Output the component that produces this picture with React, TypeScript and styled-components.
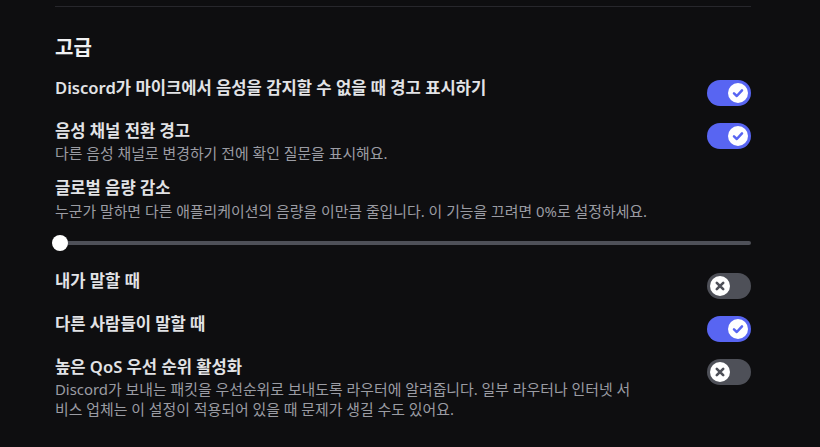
import styled, { createGlobalStyle } from "styled-components";

const GlobalStyle = createGlobalStyle`
  html, body {
    margin: 0;
    padding: 0;
    background: #0e0e10;
  }
  body {
    font-family: "Noto Sans", "Noto Sans CJK KR", sans-serif;
    color: #dfe0e3;
  }
`;

interface ISetting {
  title: string;
  desc?: string;
  checked: boolean;
}

const topSettings: ISetting[] = [
  {
    title: "Discord가 마이크에서 음성을 감지할 수 없을 때 경고 표시하기",
    checked: true,
  },
  {
    title: "음성 채널 전환 경고",
    desc: "다른 음성 채널로 변경하기 전에 확인 질문을 표시해요.",
    checked: true,
  },
];

const bottomSettings: ISetting[] = [
  { title: "내가 말할 때", checked: false },
  { title: "다른 사람들이 말할 때", checked: true },
  {
    title: "높은 QoS 우선 순위 활성화",
    desc: "Discord가 보내는 패킷을 우선순위로 보내도록 라우터에 알려줍니다. 일부 라우터나 인터넷 서비스 업체는 이 설정이 적용되어 있을 때 문제가 생길 수도 있어요.",
    checked: false,
  },
];

function Toggle({ checked }: { checked: boolean }) {
  return (
    <Switch $on={checked}>
      <Knob>
        {checked ? (
          <svg width="14" height="14" viewBox="0 0 14 14">
            <path
              d="M3 7.4 L5.8 10 L11 4.3"
              fill="none"
              stroke="#5865f2"
              strokeWidth="2.5"
              strokeLinecap="round"
              strokeLinejoin="round"
            />
          </svg>
        ) : (
          <svg width="14" height="14" viewBox="0 0 14 14">
            <path
              d="M3.8 3.8 L10.2 10.2 M10.2 3.8 L3.8 10.2"
              fill="none"
              stroke="#4e5058"
              strokeWidth="2.6"
              strokeLinecap="round"
            />
          </svg>
        )}
      </Knob>
    </Switch>
  );
}

function SettingRow({ data }: { data: ISetting }) {
  return (
    <Row>
      <TextWrapper>
        <Title>{data.title}</Title>
        {data.desc && <Desc>{data.desc}</Desc>}
      </TextWrapper>
      <Toggle checked={data.checked} />
    </Row>
  );
}

function App() {
  return (
    <>
      <GlobalStyle />
      <Container>
        <Divider />
        <Heading>고급</Heading>
        <List>
          {topSettings.map((s) => (
            <SettingRow key={s.title} data={s} />
          ))}
          <SliderBlock>
            <Title>글로벌 음량 감소</Title>
            <Desc>
              누군가 말하면 다른 애플리케이션의 음량을 이만큼 줄입니다. 이 기능을
              끄려면 0%로 설정하세요.
            </Desc>
            <Slider>
              <Track />
              <Handle />
            </Slider>
          </SliderBlock>
          {bottomSettings.map((s) => (
            <SettingRow key={s.title} data={s} />
          ))}
        </List>
      </Container>
    </>
  );
}

const Container = styled.div`
  width: 696px;
  padding: 6px 0 0 55px;
  box-sizing: content-box;
`;

const Divider = styled.div`
  height: 1px;
  background: #27272c;
`;

const Heading = styled.h2`
  margin: 29px 0 18px;
  font-size: 20px;
  line-height: 24px;
  font-weight: 700;
  color: #f0f1f3;
`;

const List = styled.div`
  display: flex;
  flex-direction: column;
  gap: 15px;
`;

const Row = styled.div`
  display: flex;
  align-items: flex-start;
  justify-content: space-between;
`;

const TextWrapper = styled.div`
  display: flex;
  flex-direction: column;
  gap: 2px;
  max-width: 588px;
`;

const Title = styled.div`
  font-size: 16.6px;
  line-height: 20px;
  font-weight: 600;
  color: #e2e3e6;
`;

const Desc = styled.div`
  font-size: 14.9px;
  line-height: 20px;
  font-weight: 400;
  color: #9b9ca3;
`;

const Switch = styled.div<{ $on: boolean }>`
  flex: none;
  margin-top: 2px;
  width: 44px;
  height: 26px;
  border-radius: 13px;
  background: ${(p) => (p.$on ? "#5865f2" : "#4e5058")};
  display: flex;
  align-items: center;
  justify-content: ${(p) => (p.$on ? "flex-end" : "flex-start")};
  padding: 0 3px;
  box-sizing: border-box;
`;

const Knob = styled.div`
  width: 20px;
  height: 20px;
  border-radius: 50%;
  background: #ffffff;
  display: flex;
  align-items: center;
  justify-content: center;
`;

const SliderBlock = styled.div`
  display: flex;
  flex-direction: column;
  gap: 3px;
  padding-bottom: 5px;
`;

const Slider = styled.div`
  position: relative;
  height: 16px;
  margin: 11px 0 0 0;
  display: flex;
  align-items: center;
`;

const Track = styled.div`
  flex: 1;
  height: 4px;
  border-radius: 2px;
  background: #4e5058;
`;

const Handle = styled.div`
  position: absolute;
  left: -3px;
  top: 0;
  width: 16px;
  height: 16px;
  border-radius: 50%;
  background: #ffffff;
`;

export default App;
